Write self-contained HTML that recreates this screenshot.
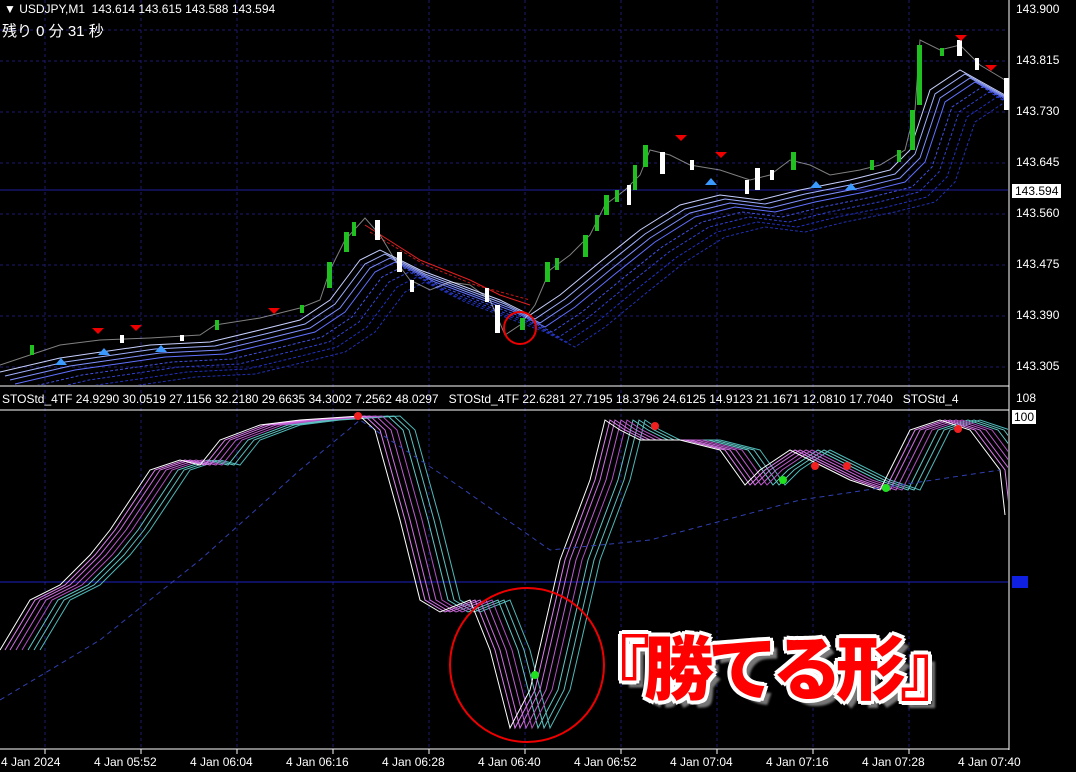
<!DOCTYPE html>
<html><head><meta charset="utf-8"><style>
body{margin:0;background:#000;width:1076px;height:772px;overflow:hidden;position:relative;font-family:"Liberation Sans","Noto Sans CJK JP",sans-serif}
.t{position:absolute;color:#fff;font-size:12px;white-space:nowrap}
.ax{position:absolute;left:1016px;color:#fff;font-size:12px}
.big{position:absolute;left:580px;top:620px;font-size:70px;line-height:90px;font-weight:900;color:#f00;font-family:"Noto Sans CJK JP",sans-serif;letter-spacing:-6px;white-space:nowrap;
text-shadow:3px 3px 0 #fff,-3px -3px 0 #fff,3px -3px 0 #fff,-3px 3px 0 #fff,4px 0 0 #fff,-4px 0 0 #fff,0 4px 0 #fff,0 -4px 0 #fff,7px 7px 2px #777}
</style></head><body>
<svg width="1076" height="772" style="position:absolute;left:0;top:0">
<defs>
<clipPath id="c1"><rect x="0" y="0" width="1008" height="385"/></clipPath>
<clipPath id="c2"><rect x="0" y="411" width="1008" height="337"/></clipPath>
<path id="ma" d="M0,372 L60,358 L150,345 L210,342 L260,330 L300,320 L330,300 L360,260 L380,250 L420,270 L460,285 L500,300 L530,315 L560,295 L600,262 L640,230 L680,205 L720,195 L760,200 L800,190 L850,180 L890,170 L910,150 L930,90 L960,70 L1005,95"/>
<path id="st" d="M0,650 L30,600 L60,585 L90,555 L110,530 L150,470 L180,460 L200,465 L220,440 L260,425 L300,420 L360,416 L375,430 L400,520 L420,600 L440,612 L470,600 L490,650 L510,728 L530,690 L560,560 L590,480 L605,420 L620,430 L640,440 L680,440 L720,450 L745,485 L760,470 L790,450 L810,460 L850,480 L880,490 L910,430 L940,420 L970,430 L1000,470 L1005,515"/></defs>
<g stroke="#1a1a6e" stroke-dasharray="3,3" stroke-width="1">
<line x1="0" y1="30" x2="1008" y2="30"/><line x1="0" y1="112" x2="1008" y2="112"/><line x1="0" y1="163" x2="1008" y2="163"/><line x1="0" y1="214" x2="1008" y2="214"/><line x1="0" y1="265" x2="1008" y2="265"/><line x1="0" y1="316" x2="1008" y2="316"/><line x1="0" y1="367" x2="1008" y2="367"/><line x1="0" y1="61" x2="1008" y2="61"/>
<line x1="45" y1="0" x2="45" y2="748"/><line x1="141" y1="0" x2="141" y2="748"/><line x1="237" y1="0" x2="237" y2="748"/><line x1="333" y1="0" x2="333" y2="748"/><line x1="429" y1="0" x2="429" y2="748"/><line x1="525" y1="0" x2="525" y2="748"/><line x1="621" y1="0" x2="621" y2="748"/><line x1="717" y1="0" x2="717" y2="748"/><line x1="813" y1="0" x2="813" y2="748"/><line x1="909" y1="0" x2="909" y2="748"/>
</g>
<line x1="0" y1="190" x2="1008" y2="190" stroke="#2020a0"/>
<line x1="0" y1="582" x2="1008" y2="582" stroke="#2020c0"/>
<g fill="none" stroke="#fff"><line x1="1009" y1="0" x2="1009" y2="750"/><line x1="0" y1="386" x2="1009" y2="386"/><line x1="0" y1="410" x2="1009" y2="410"/><line x1="0" y1="749" x2="1009" y2="749"/></g>
<g fill="none" stroke-width="1" clip-path="url(#c1)">
<use href="#ma" stroke="#c8d0ff"/><use href="#ma" stroke="#a0b0ff" transform="translate(5,4)"/><use href="#ma" stroke="#8090ff" transform="translate(10,8)"/><use href="#ma" stroke="#6070ff" transform="translate(15,12)"/><use href="#ma" stroke="#4050e0" transform="translate(22,17)" stroke-dasharray="3,2"/><use href="#ma" stroke="#3040d0" transform="translate(29,22)" stroke-dasharray="3,2"/><use href="#ma" stroke="#2030c0" transform="translate(37,27)" stroke-dasharray="3,2"/><use href="#ma" stroke="#2030b0" transform="translate(45,32)" stroke-dasharray="3,2"/>
<path d="M365,225 L420,260 L470,280 L500,295 L530,305" stroke="#e02020"/><path d="M370,232 L425,265 L475,285 L530,300" stroke="#c01818" stroke-dasharray="3,2"/>
</g>
<g stroke="#fff" fill="none" clip-path="url(#c1)">
<polyline points="0,365 30,355 60,345 100,340 150,338 200,335 215,325 260,318 300,308 320,300 330,270 345,240 365,218 380,235 395,260 410,280 430,290 450,282 470,285 490,300 505,335 520,325 535,305 550,270 570,255 590,235 605,205 625,190 640,175 650,150 670,155 690,165 720,170 750,180 770,175 790,160 810,165 830,175 860,170 880,165 905,150 915,110 920,40 940,50 960,45 980,65 1005,80" stroke-opacity="0.5"/>
</g>
<g fill="#20c020"><rect x="327" y="262" width="5" height="26"/><rect x="344" y="232" width="5" height="20"/><rect x="545" y="262" width="5" height="20"/><rect x="583" y="235" width="5" height="22"/><rect x="604" y="195" width="5" height="20"/><rect x="643" y="145" width="5" height="22"/><rect x="791" y="152" width="5" height="18"/><rect x="910" y="110" width="5" height="40"/><rect x="917" y="45" width="5" height="60"/><rect x="520" y="318" width="5" height="12"/><rect x="352" y="222" width="4" height="14"/><rect x="555" y="258" width="4" height="12"/><rect x="595" y="215" width="4" height="16"/><rect x="615" y="190" width="4" height="12"/><rect x="633" y="165" width="4" height="25"/><rect x="215" y="320" width="4" height="10"/><rect x="300" y="305" width="4" height="8"/><rect x="30" y="345" width="4" height="10"/><rect x="870" y="160" width="4" height="10"/><rect x="897" y="150" width="4" height="12"/><rect x="940" y="48" width="4" height="8"/></g>
<g fill="#fff"><rect x="375" y="220" width="5" height="20"/><rect x="397" y="252" width="5" height="20"/><rect x="495" y="305" width="5" height="28"/><rect x="660" y="152" width="5" height="22"/><rect x="755" y="168" width="5" height="22"/><rect x="957" y="40" width="5" height="16"/><rect x="1004" y="78" width="5" height="32"/><rect x="410" y="280" width="4" height="12"/><rect x="485" y="288" width="4" height="14"/><rect x="627" y="185" width="4" height="20"/><rect x="690" y="160" width="4" height="10"/><rect x="745" y="180" width="4" height="14"/><rect x="770" y="170" width="4" height="10"/><rect x="975" y="58" width="4" height="12"/><rect x="120" y="335" width="4" height="8"/><rect x="180" y="335" width="4" height="6"/></g>
<g fill="#e00"><path d="M92,328 l6,6 l6,-6z"/><path d="M130,325 l6,6 l6,-6z"/><path d="M268,308 l6,6 l6,-6z"/><path d="M675,135 l6,6 l6,-6z"/><path d="M715,152 l6,6 l6,-6z"/><path d="M955,35 l6,6 l6,-6z"/><path d="M985,65 l6,6 l6,-6z"/></g>
<g fill="#3a9aff"><path d="M55,365 l6,-7 l6,7z"/><path d="M98,355 l6,-7 l6,7z"/><path d="M155,352 l6,-7 l6,7z"/><path d="M705,185 l6,-7 l6,7z"/><path d="M810,188 l6,-7 l6,7z"/><path d="M845,190 l6,-7 l6,7z"/></g>
<circle cx="520" cy="328" r="16" fill="none" stroke="#e00" stroke-width="2"/>
<g fill="none" clip-path="url(#c2)">
<use href="#st" stroke="#4fb8b8" transform="translate(40,0)"/><use href="#st" stroke="#5fc0c0" transform="translate(34,0)"/><use href="#st" stroke="#60c8c8" transform="translate(28,0)"/><use href="#st" stroke="#b050c0" transform="translate(22,0)"/><use href="#st" stroke="#c060d0" transform="translate(16,0)"/><use href="#st" stroke="#d070e0" transform="translate(10,0)"/><use href="#st" stroke="#e080f0" transform="translate(5,0)"/>
<use href="#st" stroke="#fff"/>
<path d="M0,700 L100,640 L200,560 L300,470 L360,420 L450,480 L550,550 L650,540 L800,500 L1000,470" stroke="#3040b0" stroke-dasharray="5,4"/>
</g>
<g fill="#f02020"><circle cx="358" cy="416" r="4"/><circle cx="655" cy="426" r="4"/><circle cx="815" cy="466" r="4"/><circle cx="847" cy="466" r="4"/><circle cx="958" cy="429" r="4"/></g>
<g fill="#20e020"><circle cx="535" cy="675" r="4"/><circle cx="783" cy="480" r="4"/><circle cx="886" cy="488" r="4"/></g>
<circle cx="527" cy="665" r="77" fill="none" stroke="#e00" stroke-width="2"/>
<g stroke="#fff"><line x1="45" y1="749" x2="45" y2="754"/><line x1="141" y1="749" x2="141" y2="754"/><line x1="237" y1="749" x2="237" y2="754"/><line x1="333" y1="749" x2="333" y2="754"/><line x1="429" y1="749" x2="429" y2="754"/><line x1="525" y1="749" x2="525" y2="754"/><line x1="621" y1="749" x2="621" y2="754"/><line x1="717" y1="749" x2="717" y2="754"/><line x1="813" y1="749" x2="813" y2="754"/><line x1="909" y1="749" x2="909" y2="754"/></g>
<rect x="1012" y="576" width="16" height="12" fill="#1020e0"/>
</svg>
<div class="t" style="left:4px;top:2px">▼ USDJPY,M1 &nbsp;143.614 143.615 143.588 143.594</div>
<div class="t" style="left:2px;top:20px;font-size:15px">残り 0 分 31 秒</div>
<div class="ax" style="top:2px">143.900</div><div class="ax" style="top:53px">143.815</div><div class="ax" style="top:104px">143.730</div><div class="ax" style="top:155px">143.645</div>
<div class="ax" style="top:184px;background:#fff;color:#000;left:1012px;padding:0 3px">143.594</div>
<div class="ax" style="top:206px">143.560</div><div class="ax" style="top:257px">143.475</div><div class="ax" style="top:308px">143.390</div><div class="ax" style="top:359px">143.305</div>
<div class="t" style="left:2px;top:392px">STOStd_4TF 24.9290 30.0519 27.1156 32.2180 29.6635 34.3002 7.2562 48.0297 &nbsp;&nbsp;STOStd_4TF 22.6281 27.7195 18.3796 24.6125 14.9123 21.1671 12.0810 17.7040 &nbsp;&nbsp;STOStd_4</div>
<div class="ax" style="top:391px">108</div>
<div class="ax" style="top:410px;background:#fff;color:#000;left:1012px;padding:0 2px">100</div>
<div class="t" style="left:1px;top:755px">4 Jan 2024</div><div class="t" style="left:94px;top:755px">4 Jan 05:52</div><div class="t" style="left:190px;top:755px">4 Jan 06:04</div><div class="t" style="left:286px;top:755px">4 Jan 06:16</div><div class="t" style="left:382px;top:755px">4 Jan 06:28</div><div class="t" style="left:478px;top:755px">4 Jan 06:40</div><div class="t" style="left:574px;top:755px">4 Jan 06:52</div><div class="t" style="left:670px;top:755px">4 Jan 07:04</div><div class="t" style="left:766px;top:755px">4 Jan 07:16</div><div class="t" style="left:862px;top:755px">4 Jan 07:28</div><div class="t" style="left:958px;top:755px">4 Jan 07:40</div>
<div class="big">『勝てる形』</div>
</body></html>
